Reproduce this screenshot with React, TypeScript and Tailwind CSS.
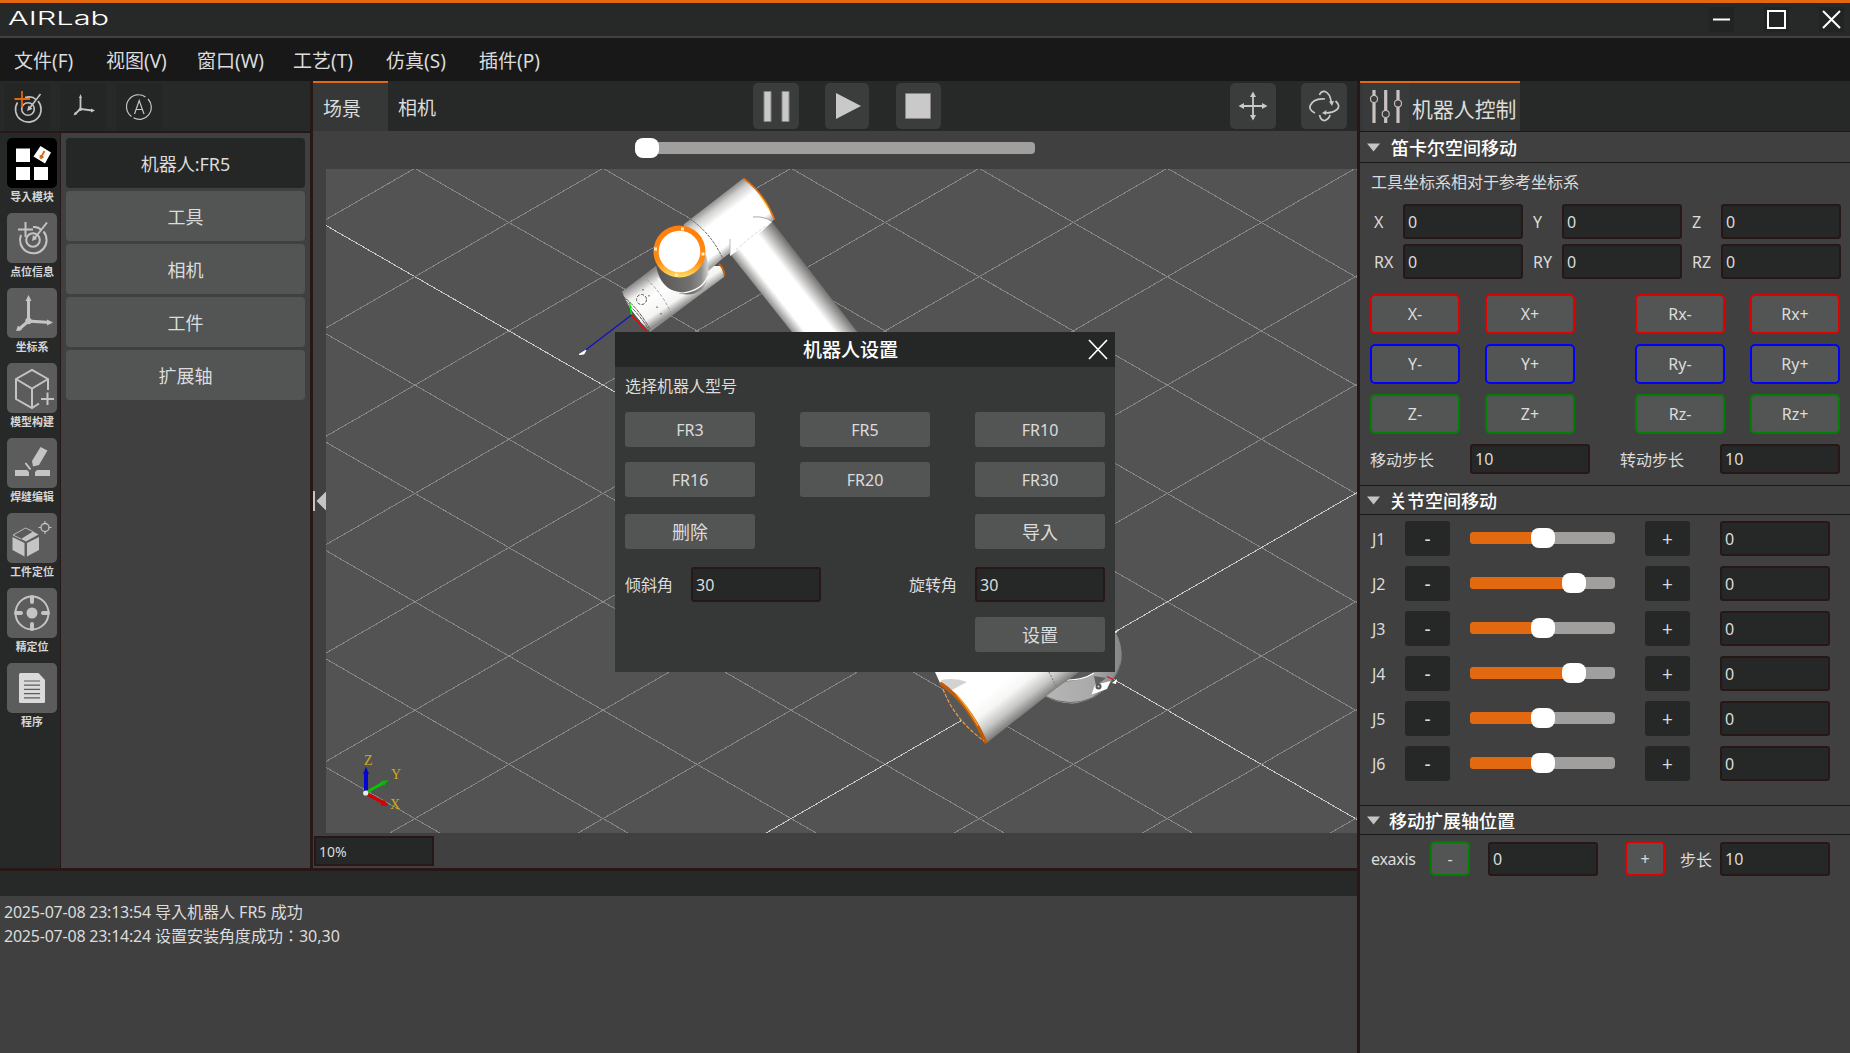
import React from "react";

const GRID_DOWN = [-7, -6, -5, -4, -3, -2, -1, 0, 1, 2, 3, 4];
const GRID_UP = [-1, 0, 1, 2, 3, 4, 5, 6, 7, 8, 9, 10];

function Field({ value, className }: { value: string; className: string }) {
  return (
    <div className={"flex shrink-0 items-center rounded-[3px] border-2 border-[#271817] bg-[#252827] pl-[3px] text-[16px] leading-none text-[#dcdcdc] " + className}>
      {value}
    </div>
  );
}

function Slider({ value, className }: { value: number; className: string }) {
  return (
    <div className={"relative flex h-5 shrink-0 items-center " + className}>
      <div className="h-3 w-full overflow-hidden rounded-[4px] bg-[#a09f9e]">
        <div className="h-full bg-[#e2690f]" style={{ width: value + 8 }} />
      </div>
      <div className="absolute top-0 h-5 w-6 rounded-lg bg-white" style={{ left: value }} />
    </div>
  );
}

function SectionHeader({ title, className, inset }: { title: string; className: string; inset: string }) {
  return (
    <div className={"flex items-center border-y border-[#181818] pl-[7px] text-[18px] font-medium leading-none text-white " + className}>
      <svg className="h-[9px] w-[13px]" viewBox="0 0 13 9"><path d="M0 0.5H13L6.5 8.5Z" fill="#c4c4c4" /></svg>
      <span className={"pt-px " + inset}>{title}</span>
    </div>
  );
}

function TargetIcon({ accent }: { accent: string }) {
  return (
    <svg className="h-[50px] w-[50px]" viewBox="0 0 50 50" fill="none" stroke="#c4c4c4" strokeWidth="2">
      <path d="M26 14Q31 13.500 34.500 17M36.500 18.500A13.300 13.300 0 1 1 14 22" />
      <circle cx="26" cy="27" r="6.800" />
      <path d="M40 9.500L27 26" />
      <path d="M25 28L26 22L30 26Z" fill="#c4c4c4" stroke="none" />
      <path d="M18.500 9V24M11 16.500H26" stroke={accent} />
    </svg>
  );
}

function AxesIcon() {
  return (
    <svg className="h-[50px] w-[50px]" viewBox="0 0 50 50" fill="#c4c4c4" stroke="#c4c4c4">
      <path d="M21.5 11V33L43 34.5M21.5 33L11 42" fill="none" strokeWidth="3" />
      <path d="M21.5 7L24.5 13H18.5ZM46 34.5L40 37.5V31.5ZM9 43L11 37.5L15 42Z" stroke="none" />
      <circle cx="21.5" cy="33" r="3.2" stroke="none" />
    </svg>
  );
}

const ICONS: Record<string, React.ReactNode> = {
  modules: (
    <svg className="h-[50px] w-[50px]" viewBox="0 0 50 50" fill="#fff">
      <rect x="9" y="10.5" width="14" height="13.5" /><rect x="9" y="29" width="14" height="13" /><rect x="27" y="29" width="14" height="13" />
      <path d="M33.5 8L44 14.5L38 25.5L26.5 18.5Z" />
      <path d="M37.500 13L33.500 20.500M33.500 20.500V17M33.500 20.500L36.500 18.500" stroke="#e2690f" strokeWidth="1.8" />
    </svg>
  ),
  target: <TargetIcon accent="#c4c4c4" />,
  axes: <AxesIcon />,
  cube: (
    <svg className="h-[50px] w-[50px]" viewBox="0 0 50 50" fill="none" stroke="#c4c4c4" strokeWidth="2">
      <path d="M41 27V16L25 7L9 16V36L25 45L32 40.5M9 16L25 25.5L41 16M25 25.5V45" />
      <path d="M40.500 29.500V42M34 36H47" />
    </svg>
  ),
  weld: (
    <svg className="h-[50px] w-[50px]" viewBox="0 0 50 50" fill="#c4c4c4">
      <path d="M8 32H20L22 34V38H8ZM28 38V34L30 32H43V38Z" />
      <path d="M33.500 9L40.500 12.500L32 27L26 28.500L25 23Z" />
      <path d="M18.500 25L23.500 31.500" stroke="#c4c4c4" strokeWidth="2" />
    </svg>
  ),
  workpiece: (
    <svg className="h-[50px] w-[50px]" viewBox="0 0 50 50" fill="#c4c4c4">
      <path d="M5.500 24L17.500 30V43.500L5.500 37ZM20 30L32 24V37L20 43.500Z" />
      <path d="M14 26L26 18.500L31.500 21.500L19 28.500Z" />
      <path d="M6 22L18.500 15L26 18.500M6 22L14 26" fill="none" stroke="#c4c4c4" strokeWidth="0.900" />
      <circle cx="38" cy="14.500" r="4" fill="none" stroke="#c4c4c4" strokeWidth="1.300" />
      <path d="M38 8V11M38 18V21M31.500 14.500H34M42 14.500H44.500" stroke="#c4c4c4" />
    </svg>
  ),
  locate: (
    <svg className="h-[50px] w-[50px]" viewBox="0 0 50 50" fill="none" stroke="#c4c4c4">
      <circle cx="25" cy="25" r="16.500" strokeWidth="2" />
      <circle cx="25" cy="25" r="5.500" fill="#c4c4c4" stroke="none" />
      <path d="M25 9V14M25 36V41M9 25H14M36 25H41" strokeWidth="4" strokeLinecap="round" />
    </svg>
  ),
  program: (
    <svg className="h-[50px] w-[50px]" viewBox="0 0 50 50">
      <path d="M12 11.500Q12 10 13.500 10H31.500L38 17V38.500Q38 40 36.500 40H13.500Q12 40 12 38.500Z" fill="#dadada" />
      <path d="M17 18H33M17 22.200H33M17 26.400H33M17 30.600H33M17 34.800H33" stroke="#5c5c58" strokeWidth="1.200" />
    </svg>
  ),
};

const SIDEBAR = [
  { icon: "modules", label: "导入模块" },
  { icon: "target", label: "点位信息" },
  { icon: "axes", label: "坐标系" },
  { icon: "cube", label: "模型构建" },
  { icon: "weld", label: "焊缝编辑" },
  { icon: "workpiece", label: "工件定位" },
  { icon: "locate", label: "精定位" },
  { icon: "program", label: "程序" },
];

const MENU = [
  { label: "文件(F)", w: "w-[92px]" },
  { label: "视图(V)", w: "w-[91px]" },
  { label: "窗口(W)", w: "w-[96px]" },
  { label: "工艺(T)", w: "w-[93px]" },
  { label: "仿真(S)", w: "w-[93px]" },
  { label: "插件(P)", w: "w-[93px]" },
];

function TitleBar() {
  return (
    <header className="flex h-[38px] shrink-0 items-center justify-between border-t-[3px] border-b-2 border-t-[#e2690f] border-b-[#404141] bg-[#272928] pl-2 pr-[6px]">
      <span className="-mt-[3px] inline-block origin-left scale-x-[1.62] font-[Inter] text-[19px] font-light leading-none text-white">AIRLab</span>
      <div className="flex gap-[30px]">
        <svg className="h-[25px] w-[25px] bg-[#222424]" viewBox="0 0 25 25" stroke="#fff" strokeWidth="2"><path d="M4 12.500H21" /></svg>
        <svg className="h-[25px] w-[25px] bg-[#222424]" viewBox="0 0 25 25" stroke="#fff" strokeWidth="2" fill="none"><rect x="4" y="4" width="17" height="17" /></svg>
        <svg className="h-[25px] w-[25px] bg-[#222424]" viewBox="0 0 25 25" stroke="#fff" strokeWidth="2"><path d="M4 4L21 21M21 4L4 21" /></svg>
      </div>
    </header>
  );
}

function LeftArea() {
  const tile = "flex h-[46px] w-[46px] items-center justify-center bg-[#242625]";
  return (
    <div className="flex w-[310px] shrink-0 flex-col">
      <div className="flex h-[52px] shrink-0 gap-[10px] border-b-2 border-[#271817] bg-[#272928] pl-1 pt-[3px]">
        <div className={tile}>
          <svg className="h-[46px] w-[46px]" viewBox="0 0 46 46" fill="none" stroke="#c4c4c4" strokeWidth="1.600">
            <path d="M21 13.500Q28 11.500 32 15.500M34 17A12.800 12.800 0 1 1 13.500 18.500" />
            <circle cx="24" cy="25" r="6.300" />
            <path d="M36.500 10L25 25" />
            <path d="M23 27L24.500 21.500L28.500 25Z" fill="#c4c4c4" stroke="none" />
            <path d="M18 7V23M10.500 15H26" stroke="#e2690f" strokeWidth="1.800" />
          </svg>
        </div>
        <div className={tile}>
          <svg className="h-[46px] w-[46px]" viewBox="0 0 46 46" fill="#c4c4c4">
            <path d="M20.500 13V25L32 26.500M20.500 25L15 30" fill="none" stroke="#c4c4c4" strokeWidth="1.800" />
            <path d="M20.500 10L22 14H19ZM35 26.500L31 28.500V24.500ZM13.500 31.500L15 28L17.500 30Z" />
            <circle cx="20.500" cy="25.300" r="1.800" />
          </svg>
        </div>
        <div className={tile}>
          <svg className="h-[46px] w-[46px]" viewBox="0 0 46 46" fill="none" stroke="#c4c4c4" strokeWidth="1.200">
            <path d="M15.500 32.500A12 12 0 0 1 29.500 13M32 15A12 12 0 0 1 17.500 33.800" />
            <path d="M18.500 30L23.200 16.500L28 30M20 25.500H26.500" />
          </svg>
        </div>
      </div>
      <div className="flex min-h-0 flex-1">
        <nav className="flex w-[61px] shrink-0 flex-col border-r border-[#271817] bg-[#272928] pl-[7px] pt-[5px]">
          {SIDEBAR.map((s, i) => (
            <div key={s.icon} className="flex h-[75px] w-[50px] flex-col items-center">
              <div className={"h-[50px] w-[50px] rounded-[5px] " + (i === 0 ? "bg-black" : "bg-[#5c5c5c]")}>{ICONS[s.icon]}</div>
              <span className="mt-[2px] whitespace-nowrap text-[10.900px] font-bold leading-[13px] text-[#d6d6d6]">{s.label}</span>
            </div>
          ))}
        </nav>
        <div className="flex flex-1 flex-col gap-[3px] bg-[#404040] px-[5px] pt-[5px]">
          {["机器人:FR5", "工具", "相机", "工件", "扩展轴"].map((t, i) => (
            <button key={t} className={"h-[50px] shrink-0 rounded-[4px] pt-[2px] text-[18px] leading-none text-[#dcdcdc] " + (i === 0 ? "bg-[#252726]" : "bg-[#535554]")}>{t}</button>
          ))}
        </div>
      </div>
    </div>
  );
}

function Scene() {
  return (
    <svg className="block h-[664px] w-[1031px] bg-[#535353]" viewBox="326 169 1031 664">
      <defs>
        <linearGradient id="tube" gradientUnits="userSpaceOnUse" x1="743" y1="178" x2="774" y2="219">
          <stop offset="0" stopColor="#8a8987" /><stop offset="0.150" stopColor="#cfcfcd" /><stop offset="0.350" stopColor="#fff" /><stop offset="0.850" stopColor="#fff" /><stop offset="1" stopColor="#a5a5a3" />
        </linearGradient>
        <linearGradient id="wrist" gradientUnits="userSpaceOnUse" x1="622" y1="291" x2="648" y2="330">
          <stop offset="0" stopColor="#8a8987" /><stop offset="0.250" stopColor="#efefee" /><stop offset="0.450" stopColor="#fff" /><stop offset="0.800" stopColor="#f4f4f3" /><stop offset="1" stopColor="#8d8d8b" />
        </linearGradient>
        <linearGradient id="arm" gradientUnits="userSpaceOnUse" x1="730" y1="255" x2="772" y2="222">
          <stop offset="0" stopColor="#868583" /><stop offset="0.220" stopColor="#fff" /><stop offset="0.650" stopColor="#fff" /><stop offset="1" stopColor="#706f6d" />
        </linearGradient>
        <linearGradient id="forearm" gradientUnits="userSpaceOnUse" x1="963" y1="713" x2="986" y2="743">
          <stop offset="0" stopColor="#fff" /><stop offset="0.350" stopColor="#f6f6f5" /><stop offset="0.700" stopColor="#c6c6c4" /><stop offset="1" stopColor="#7d7c7a" />
        </linearGradient>
        <linearGradient id="neck" gradientUnits="userSpaceOnUse" x1="656" y1="280" x2="709" y2="280">
          <stop offset="0" stopColor="#555452" /><stop offset="0.650" stopColor="#72716f" /><stop offset="0.850" stopColor="#8d8d8b" /><stop offset="1" stopColor="#dcdcdb" />
        </linearGradient>
        <linearGradient id="ring" gradientUnits="userSpaceOnUse" x1="0" y1="225" x2="0" y2="278">
          <stop offset="0" stopColor="#ff7d0a" /><stop offset="0.700" stopColor="#ff8c12" /><stop offset="1" stopColor="#ffe465" />
        </linearGradient>
        <linearGradient id="base" gradientUnits="userSpaceOnUse" x1="1050" y1="0" x2="1122" y2="0">
          <stop offset="0" stopColor="#b5b5b5" /><stop offset="0.600" stopColor="#a9a9a9" /><stop offset="1" stopColor="#848484" />
        </linearGradient>
      </defs>
      <g strokeWidth="1" shapeRendering="crispEdges">
        {GRID_DOWN.map((m) => (
          <line key={"d" + m} x1={603 + 188.1 * m} y1={168.300} x2={603 + 188.1 * m + 1154.500} y2={833.500} stroke={m === -2 ? "#c9c9c9" : "#868686"} />
        ))}
        {GRID_UP.map((m) => (
          <line key={"u" + m} x1={603 + 188.1 * m} y1={168.300} x2={603 + 188.1 * m - 1154.500} y2={833.500} stroke={m === 7 ? "#c9c9c9" : "#868686"} />
        ))}
      </g>

      <path d="M1115 631Q1123 645 1121.500 660Q1119 674 1108 686Q1093 702 1072 703.500Q1055 703 1044 695L1060 665Z" fill="url(#base)" />
      <path d="M1044 696Q1070 708 1092 698Q1115 684 1120.500 664" fill="none" stroke="#6d6d6d" />
      <path d="M1055 681Q1078 684 1095 672L1095 665H1060Z" fill="#5a5a5a" />
      <path d="M1058 679.500Q1080 682 1094 673" fill="none" stroke="#fff" strokeWidth="1.200" />
      <path d="M1094 676L1106 678L1096 686Z" fill="#606060" />
      <path d="M1091.500 694.500L1095 685L1110.500 681L1107 689Z" fill="#fff" />
      <circle cx="1098.500" cy="686.500" r="3" fill="#555" /><circle cx="1098.500" cy="686.500" r="1.100" fill="#ccc" />
      <path d="M1107 676.500L1114 680" stroke="#f00" strokeWidth="1.200" />
      <path d="M1117 679L1112 683L1116 684ZM1118 629L1114 633L1117 632.500Z" fill="#fff" />

      <path d="M935 672L940 683L986 743.500L1056 688.500L1079 672Z" fill="url(#forearm)" />
      <path d="M941 680Q955 677 967 682L948 692Z" fill="#a5a5a3" opacity="0.500" />
      <path d="M1049 672L1057 688" stroke="#777" strokeDasharray="2 1.500" />
      <path d="M940 683Q965 700 986 743Q953 718 940 683Z" fill="#585858" />
      <path d="M940 683Q968 702 986 743" fill="none" stroke="#c45a05" strokeWidth="3.400" />
      <path d="M956 694Q971 712 978 726" fill="none" stroke="#f2a52a" strokeWidth="1.200" />
      <path d="M943 689Q954 719 984 741" fill="none" stroke="#ef9b3a" strokeWidth="1.200" strokeDasharray="4 1.500" />

      <path d="M730 254L793.500 334H859L772 221.500L740 215Z" fill="url(#arm)" />
      <path d="M621.500 292L656 266L720 266Q726 270 724 277L650 332Q630 312 621.500 292Z" fill="url(#wrist)" />
      <path d="M719 264Q724 268 724.500 276" fill="none" stroke="#c95d06" strokeWidth="1.800" />
      <path d="M743 178.500L683.500 224.500L704 275L722 259L774.500 219.500Q764 193 743 178.500Z" fill="url(#tube)" />
      <path d="M753 217Q765 216 772 222L752 240L730 256V240Z" fill="#fff" />
      <path d="M753 217Q764 216 771 221" fill="none" stroke="#a9a9a7" />
      <path d="M730 239V254" fill="none" stroke="#b9b9b7" />
      <path d="M736 250Q750 237 766 226" fill="none" stroke="#d4d4d2" strokeDasharray="3 2" />
      <path d="M743.500 178.500Q764 193 774.500 219.500" fill="none" stroke="#e2700f" strokeWidth="1.600" />
      <path d="M759 195Q765 203 769 210" fill="none" stroke="#ffe465" strokeWidth="1.200" />
      <path d="M690 219Q711 233 723 259" fill="none" stroke="#666" strokeDasharray="3 1" />

      <path d="M656 265Q659 284 673 291Q690 299 703 289Q712 276 706 255Z" fill="url(#neck)" />
      <path d="M658 278Q664 291 682 293Q702 291 708 276" fill="none" stroke="#fff" strokeWidth="1.200" />
      <circle cx="679.500" cy="251.500" r="26" fill="url(#ring)" />
      <circle cx="679.500" cy="251.500" r="20.800" fill="#fff" />
      <path d="M681 227.500h3v3h-3zM654 247.500h3v3h-3zM701.500 252.500h3v3h-3zM675 273.500h3v3h-3z" fill="#ffeccd" />

      <circle cx="641.500" cy="299.500" r="5" fill="none" stroke="#555" strokeDasharray="3 1.500" />
      <path d="M643 289V290.500M649 295V296.500M657 306.500V308M661 313V314.500" stroke="#444" />
      <path d="M643 276Q662 292 671 313" fill="none" stroke="#999" strokeDasharray="3 2" />
      <path d="M622 292Q624 300 634 310Q645 322 649 331M622 296Q636 305 650 329M625 305Q633 314 640 321" fill="none" stroke="#555" strokeDasharray="4 1" />
      <path d="M629.500 302L631.500 315" stroke="#0e0" strokeWidth="1.400" />
      <path d="M631.500 315L646 331" stroke="#f00" strokeWidth="1.400" />
      <path d="M631.500 315L583 352" stroke="#1010c0" strokeWidth="1.200" />
      <path d="M586 350L579 354.500L584 354Z" fill="#fff" stroke="#fff" />

      <path d="M366 793V773" stroke="#0505cf" strokeWidth="4" />
      <path d="M366 767L369 774H363Z" fill="#0505cf" />
      <path d="M367 792L383 783" stroke="#06c506" strokeWidth="3" />
      <path d="M388.500 780L384 786L380.500 781Z" fill="#06b506" />
      <path d="M367 794L383 802.500" stroke="#cf0505" strokeWidth="3.600" />
      <path d="M388.500 806L380.500 805.500L384 799.500Z" fill="#cf0505" />
      <circle cx="365.700" cy="793" r="2.600" fill="#eee" />
      <g fill="#cdaa1c" fontFamily="Liberation Serif, serif" fontSize="14">
        <text x="364" y="765">Z</text><text x="391" y="779">Y</text><text x="390" y="809">X</text>
      </g>
    </svg>
  );
}

function Dialog() {
  const btn = "h-[35px] w-[130px] rounded-[3px] bg-[#535554] leading-none text-[#dcdcdc]";
  return (
    <div className="absolute left-[289px] top-[163px] h-[340px] w-[500px] bg-[#363837]">
      <div className="flex h-[35px] items-center bg-[#252726] pr-[7px]">
        <span className="ml-[188px] flex-1 pt-[2px] text-[19px] font-medium leading-none text-white">机器人设置</span>
        <svg className="h-[21px] w-5" viewBox="0 0 20 21" stroke="#fff" strokeWidth="1.700"><path d="M1 1L19 20M19 1L1 20" /></svg>
      </div>
      <div className="flex flex-col px-[10px] text-[16px] text-[#dcdcdc]">
        <span className="mt-[10px] h-[35px] leading-[18px]">选择机器人型号</span>
        <div className="grid grid-cols-[130px_130px_130px] justify-between gap-y-[15px]">
          {["FR3", "FR5", "FR10", "FR16", "FR20", "FR30"].map((m) => (
            <button key={m} className={btn + " text-[16px]"}>{m}</button>
          ))}
        </div>
        <div className="mt-[17px] flex justify-between">
          <button className={btn + " text-[18px]"}>删除</button>
          <button className={btn + " text-[18px]"}>导入</button>
        </div>
        <div className="mt-[18px] flex items-center">
          <span className="w-[66px] pt-px leading-none">倾斜角</span>
          <Field value="30" className="h-[35px] w-[130px]" />
          <span className="ml-[88px] w-[66px] pt-px leading-none">旋转角</span>
          <Field value="30" className="h-[35px] w-[130px]" />
        </div>
        <button className={btn + " mt-[15px] self-end text-[18px]"}>设置</button>
      </div>
    </div>
  );
}

function CenterArea() {
  const tile = "shrink-0 rounded-[5px] bg-[#3b3d3c]";
  return (
    <div className="flex min-w-0 flex-1 flex-col border-l-[3px] border-[#271817] bg-[#404040]">
      <div className="flex h-[50px] shrink-0 bg-[#272928] text-[19px] leading-none text-[#dcdcdc]">
        <div className="flex w-[75px] items-center border-t-2 border-[#e2690f] bg-[#363837] pl-[10px] pt-[4px]">场景</div>
        <div className="flex w-[365px] items-center pl-[10px] pt-[5px]">相机</div>
        <div className="flex flex-1 items-start pt-[2px]">
          <svg className={tile + " h-[46px] w-[46px]"} viewBox="0 0 46 46" fill="#c9c9c9" stroke="#8a8484" strokeWidth="1"><path d="M11 8.500h7v30h-7zM29 8.500h7v30h-7z" /></svg>
          <svg className={tile + " ml-[26px] h-[46px] w-[44px]"} viewBox="0 0 44 46" fill="#c9c9c9"><path d="M11 10L36 23L11 36Z" /></svg>
          <svg className={tile + " ml-[27px] h-[46px] w-[45px]"} viewBox="0 0 45 46" fill="#c9c9c9" stroke="#8a8484"><path d="M9.500 10.500h25v25h-25z" /></svg>
          <svg className={tile + " ml-auto h-[46px] w-[46px]"} viewBox="0 0 46 46" fill="#c9c9c9"><path d="M23 12V34M12 23H34" stroke="#c9c9c9" strokeWidth="1.800" /><path d="M23 8.500L26 14H20ZM23 37.500L26 32H20ZM8.500 23L14 20V26ZM37.500 23L32 20V26Z" /></svg>
          <svg className={tile + " ml-[25px] mr-[10px] h-[46px] w-[46px]"} viewBox="0 0 46 46" fill="none" stroke="#c9c9c9" strokeWidth="1.700">
            <path d="M18.500 12Q20 8 24 8.500Q29 10 30.500 20M24 16Q12 15 9 23Q8 27 14 30M34.500 18Q40 23 36 26.500Q32 30 24 30M18.500 32Q20 38 24 37.500Q28 36 29 32" />
            <path d="M28 18.500L33 18L31 23ZM25.500 27L25 32L21 30Z" fill="#c9c9c9" stroke="none" />
          </svg>
        </div>
      </div>
      <div className="h-[38px] shrink-0 pl-[322px] pt-[7px]">
        <Slider value={0} className="w-[400px]" />
      </div>
      <div className="flex shrink-0">
        <div className="flex w-[13px] items-center">
          <svg className="h-5 w-[13px]" viewBox="0 0 13 20" fill="#c4c4c4"><path d="M0 0H2V20H0ZM13 0.500V19.500L3.500 10Z" /></svg>
        </div>
        <div className="relative">
          <Scene />
          <Dialog />
        </div>
      </div>
      <div className="flex flex-1 pl-px pt-[3px]">
        <div className="flex h-[30px] w-[120px] items-center border-2 border-[#271817] bg-[#252827] pl-[3px] pt-px text-[14px] leading-none text-[#dcdcdc]">10%</div>
      </div>
    </div>
  );
}

const JOG = [
  { border: "border-[#e00000]", labels: ["X-", "X+", "Rx-", "Rx+"] },
  { border: "border-[#0000ff]", labels: ["Y-", "Y+", "Ry-", "Ry+"] },
  { border: "border-[#008000]", labels: ["Z-", "Z+", "Rz-", "Rz+"] },
];

const JOINTS = [
  { name: "J1", v: 61 }, { name: "J2", v: 92 }, { name: "J3", v: 61 },
  { name: "J4", v: 92 }, { name: "J5", v: 61 }, { name: "J6", v: 61 },
];

function RightPanel() {
  return (
    <aside className="flex w-[493px] shrink-0 flex-col border-l-[3px] border-[#271817] bg-[#404040] text-[16px] leading-none text-[#dcdcdc]">
      <div className="flex h-[50px] shrink-0 bg-[#272928]">
        <div className="flex w-[160px] items-center border-t-2 border-[#e2690f] bg-[#363837]">
          <svg className="ml-[2px] h-12 w-[47px] bg-[#393a3b]" viewBox="0 0 47 48" stroke="#c9c2bf" strokeWidth="3.200" fill="none">
            <path d="M12 7V13M12 20V40M23.700 7V28M23.700 35V40M36 7V17M36 24V40" />
            <g strokeWidth="1.100"><circle cx="12" cy="16" r="3.500" /><circle cx="23.700" cy="31" r="3.500" /><circle cx="36" cy="20.500" r="3.500" /></g>
          </svg>
          <span className="ml-[3px] mt-[4px] whitespace-nowrap text-[20.900px]">机器人控制</span>
        </div>
      </div>
      <SectionHeader title="笛卡尔空间移动" className="h-8 shrink-0" inset="ml-[11px]" />
      <span className="ml-[11px] mt-[10px] h-[31px] leading-[18px]">工具坐标系相对于参考坐标系</span>
      <div className="grid grid-cols-[29px_120px_39px_120px_39px_120px] gap-y-[5px] pl-[14px]">
        {[["X", "Y", "Z"], ["RX", "RY", "RZ"]].map((r) =>
          r.map((l, i) => (
            <React.Fragment key={l}>
              <span className={"self-center " + (i > 0 ? "pl-[10px]" : "")}>{l}</span>
              <Field value="0" className="h-[35px] w-[120px]" />
            </React.Fragment>
          ))
        )}
      </div>
      <div className="mt-[15px] flex flex-col gap-[10px] pl-[10px]">
        {JOG.map((r) => (
          <div key={r.border} className="grid grid-cols-[115px_150px_115px_90px]">
            {r.labels.map((l) => (
              <button key={l} className={"h-10 w-[90px] rounded-[5px] border-2 bg-[#535554] leading-none " + r.border}>{l}</button>
            ))}
          </div>
        ))}
      </div>
      <div className="mt-[10px] flex items-center pl-[10px]">
        <span className="w-[100px] pt-[2px]">移动步长</span>
        <Field value="10" className="h-[30px] w-[120px]" />
        <span className="ml-[30px] w-[100px] pt-[2px]">转动步长</span>
        <Field value="10" className="h-[30px] w-[120px]" />
      </div>
      <SectionHeader title="关节空间移动" className="mt-[11px] h-[30px] shrink-0" inset="ml-[9px]" />
      <div className="mt-[6px] flex flex-col gap-[10px] pl-[11px]">
        {JOINTS.map((j) => (
          <div key={j.name} className="flex items-center">
            <span className="w-[34px] pl-px">{j.name}</span>
            <button className="h-[35px] w-[45px] rounded-[3px] bg-[#252827] pt-[2px] text-[19px] leading-none">-</button>
            <Slider value={j.v} className="-mt-px ml-5 w-[145px]" />
            <button className="ml-[30px] h-[35px] w-[45px] rounded-[3px] bg-[#252827] pt-[2px] text-[19px] leading-none">+</button>
            <Field value="0" className="ml-[30px] h-[35px] w-[110px]" />
          </div>
        ))}
      </div>
      <SectionHeader title="移动扩展轴位置" className="mt-[24px] h-[30px] shrink-0" inset="ml-[9px]" />
      <div className="mt-[6px] flex items-center pl-[11px]">
        <span className="w-[59px] tracking-[-0.3px]">exaxis</span>
        <button className="h-[35px] w-10 rounded-[5px] border-2 border-[#008000] bg-[#535554] leading-none">-</button>
        <Field value="0" className="ml-[18px] h-[34px] w-[110px]" />
        <button className="ml-[27px] h-[35px] w-10 rounded-[5px] border-2 border-[#e00000] bg-[#535554] leading-none">+</button>
        <span className="ml-[15px] w-10 pt-[3px]">步长</span>
        <Field value="10" className="h-[34px] w-[110px]" />
      </div>
    </aside>
  );
}

const LOG = [
  { time: "2025-07-08 23:13:54 ", text: "导入机器人 FR5 成功" },
  { time: "2025-07-08 23:14:24 ", text: "设置安装角度成功：30,30" },
];

export default function App() {
  return (
    <div className="flex h-[1053px] w-[1850px] flex-col overflow-hidden bg-[#404040] font-['Noto_Sans','Noto_Sans_CJK_JP',sans-serif]">
      <TitleBar />
      <div className="flex h-[43px] shrink-0 items-center bg-[#181818] pl-[14px] pt-1 text-[19px] leading-none text-[#dcdcdc]">
        {MENU.map((m) => (
          <span key={m.label} className={"shrink-0 whitespace-nowrap " + m.w}>{m.label}</span>
        ))}
      </div>
      <div className="flex min-h-0 flex-1">
        <div className="flex min-w-0 flex-1 flex-col">
          <div className="flex h-[787px] shrink-0">
            <LeftArea />
            <CenterArea />
          </div>
          <div className="h-7 shrink-0 border-t-[3px] border-[#271817] bg-[#272928]" />
          <div className="flex-1 pl-1 pt-[4px] text-[16px] leading-6 text-[#dcdcdc]">
            {LOG.map((l) => (
              <div key={l.time} className="whitespace-pre"><span className="tracking-[-0.22px]">{l.time}</span>{l.text}</div>
            ))}
          </div>
        </div>
        <RightPanel />
      </div>
    </div>
  );
}
